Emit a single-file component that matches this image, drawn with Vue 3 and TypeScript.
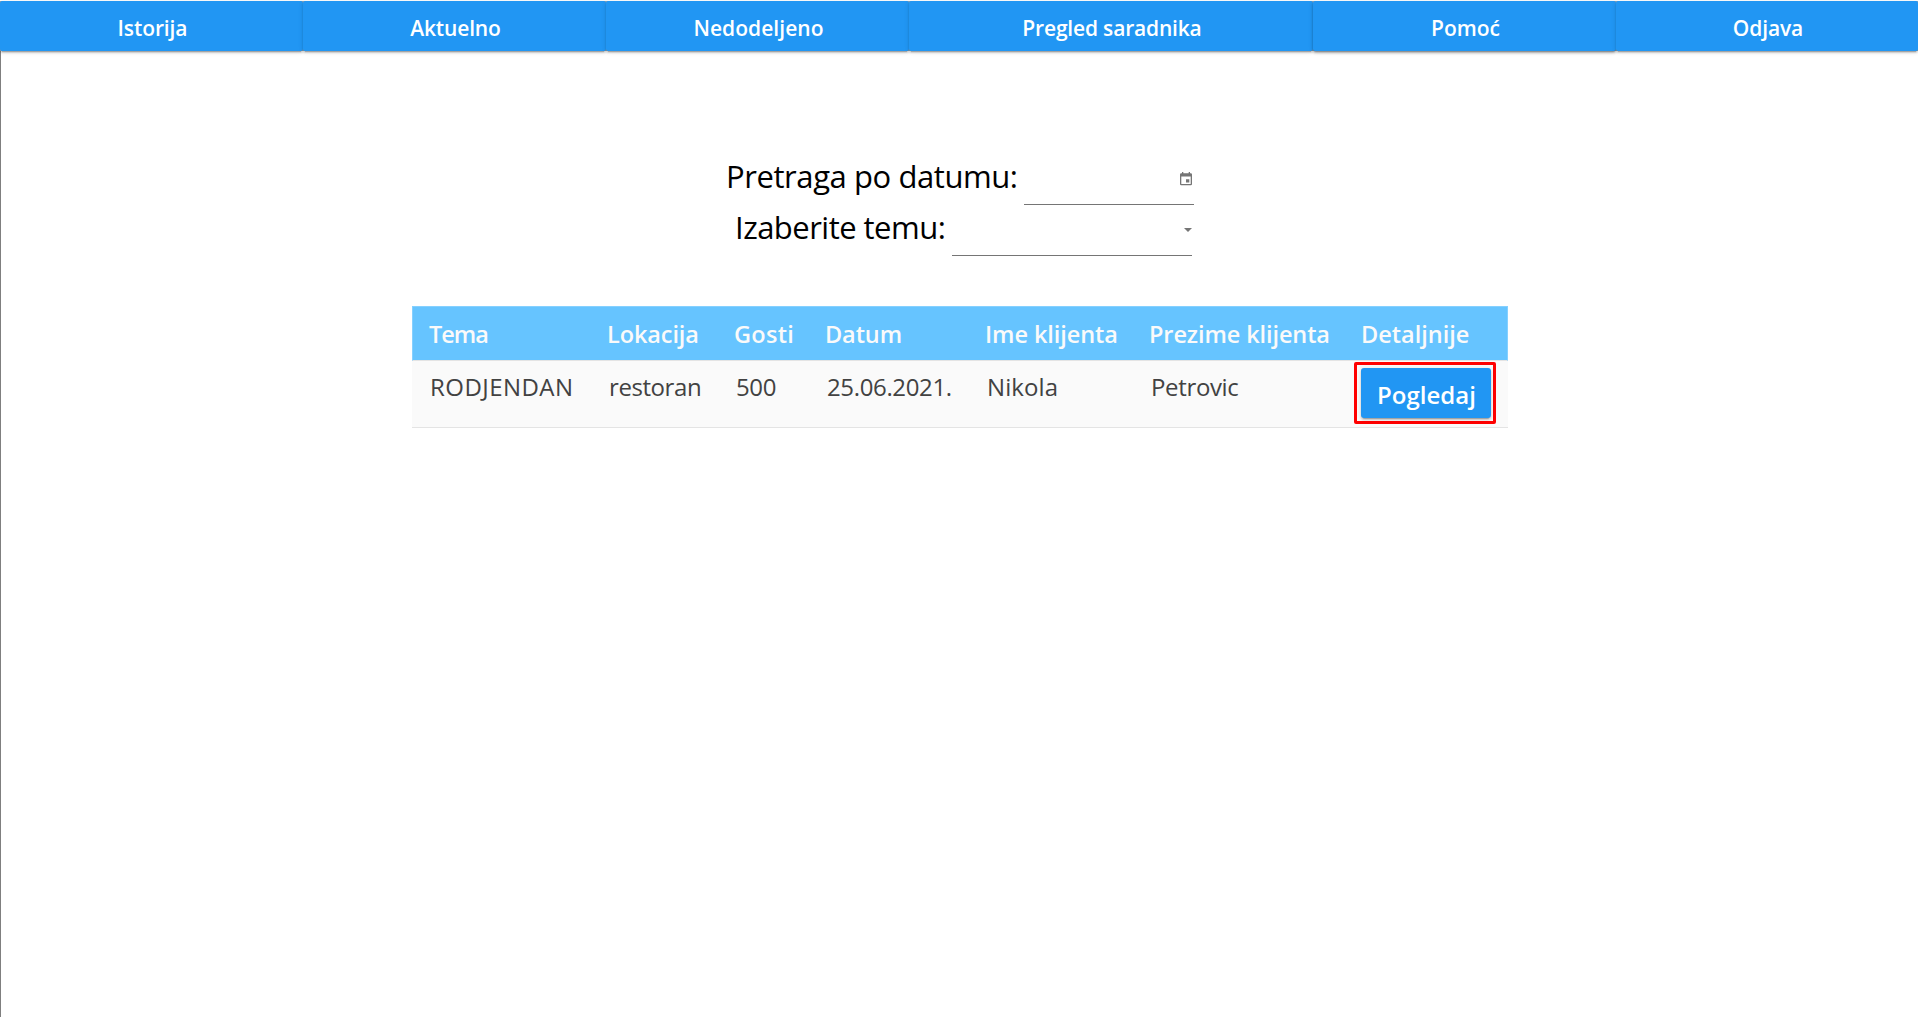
<script setup lang="ts">
interface NavItem {
  label: string
  active?: boolean
  tracking: number
}

interface Column {
  title: string
  value: string
  titleTracking: number
  valueTracking: number
}

const nav: NavItem[] = [
  { label: 'Istorija', tracking: -0.1 },
  { label: 'Aktuelno', tracking: -0.15 },
  { label: 'Nedodeljeno', tracking: 0.05 },
  { label: 'Pregled saradnika', tracking: -0.18 },
  { label: 'Pomoć', active: true, tracking: 0 },
  { label: 'Odjava', tracking: -0.1 },
]

const columns: Column[] = [
  { title: 'Tema', value: 'RODJENDAN', titleTracking: -1, valueTracking: 0.45 },
  { title: 'Lokacija', value: 'restoran', titleTracking: -0.1, valueTracking: -0.42 },
  { title: 'Gosti', value: '500', titleTracking: 0.3, valueTracking: -0.4 },
  { title: 'Datum', value: '25.06.2021.', titleTracking: -0.1, valueTracking: -0.36 },
  { title: 'Ime klijenta', value: 'Nikola', titleTracking: -0.08, valueTracking: 0.1 },
  { title: 'Prezime klijenta', value: 'Petrovic', titleTracking: -0.1, valueTracking: -0.35 },
]
</script>

<template>
  <div class="page">
    <nav class="nav">
      <button v-for="item in nav" :key="item.label" class="nav-button" :class="{ active: item.active }">
        <span :style="{ letterSpacing: item.tracking + 'px' }">{{ item.label }}</span>
      </button>
    </nav>

    <main class="content">
      <section class="filters">
        <div class="filter date-filter">
          <span class="label">Pretraga po datumu:</span>
          <div class="field">
            <svg width="12" height="14" viewBox="0 0 12 14" fill="#757575">
              <path fill-rule="evenodd" d="M2 0h1.3v1.3h5.4V0H10v1.3h.8Q12 1.3 12 2.5v9.6q0 1.2-1.2 1.2H1.2Q0 13.3 0 12.1V2.5Q0 1.3 1.2 1.3H2zM1.3 4.6v7.4h9.4V4.6zM6 7.3h3.3v3.300H6z" />
            </svg>
          </div>
        </div>
        <div class="filter theme-filter">
          <span class="label">Izaberite temu:</span>
          <div class="field">
            <svg width="8" height="4" viewBox="0 0 8 4"><path d="M0 0h8L4 4z" fill="#757575" /></svg>
          </div>
        </div>
      </section>

      <section class="table">
        <div class="row head">
          <div v-for="col in columns" :key="col.title" class="cell" :style="{ letterSpacing: col.titleTracking + 'px' }">{{ col.title }}</div>
          <div class="cell">Detaljnije</div>
        </div>
        <div class="row body">
          <div v-for="col in columns" :key="col.title" class="cell" :style="{ letterSpacing: col.valueTracking + 'px' }">{{ col.value }}</div>
          <div class="action">
            <div class="highlight"><button class="view-button">Pogledaj</button></div>
          </div>
        </div>
      </section>
    </main>
  </div>
</template>

<style>
body {
  background: #fff;
}
</style>

<style scoped>
.page {
  box-sizing: border-box;
  height: 1017px;
  padding-top: 1px;
  display: flex;
  flex-direction: column;
  font-family: "Open Sans", "Noto Sans", sans-serif;
  overflow: hidden;
}
button {
  border: 0;
  margin: 0;
  font-family: inherit;
  font-weight: 600;
  color: #fff;
  background: #2196f3;
  box-shadow: 0 3px 1px -2px rgba(0, 0, 0, 0.2), 0 2px 2px 0 rgba(0, 0, 0, 0.14), 0 1px 5px 0 rgba(0, 0, 0, 0.12);
}
.nav {
  display: grid;
  grid-template-columns: 303px 303px 303px 404px 303px 302px;
  height: 50px;
  background: #a8a8a8;
  position: relative;
}
.nav-button {
  height: 50px;
  padding: 3px 0 0 2px;
  border-radius: 2px;
  font-size: 21px;
  line-height: 46px;
}
.nav-button.active {
  box-shadow: 0 2px 2px -1px rgba(0, 0, 0, 0.35), 0 2px 3px 0 rgba(0, 0, 0, 0.2), 0 1px 5px 0 rgba(0, 0, 0, 0.12);
}
.content {
  flex: 1;
  border-left: 1px solid #7f7f7f;
}
.filters {
  padding: 103px 0 0 725px;
}
.filter {
  display: flex;
  height: 51px;
}
.label {
  font-size: 31px;
  line-height: 45px;
  color: #000;
  letter-spacing: -0.42px;
  white-space: nowrap;
  width: 298px;
}
.field {
  box-sizing: border-box;
  height: 51px;
  width: 170px;
  border-bottom: 1px solid #757575;
  display: flex;
  justify-content: flex-end;
  align-items: flex-start;
  padding: 18px 2px 0 0;
}
.theme-filter {
  padding-left: 9px;
}
.theme-filter .label {
  width: 217px;
  letter-spacing: -0.52px;
}
.theme-filter .field {
  width: 240px;
  padding: 23px 0 0;
}
.table {
  width: 1096px;
  margin: 50px 0 0 411px;
}
.row {
  display: grid;
  grid-template-columns: 178px 127px 91px 160px 164px 212px 164px;
  box-sizing: border-box;
}
.head {
  height: 55px;
  border: 1px solid #85d0ff;
  border-bottom-color: #e4e4e4;
  background: #66c4ff;
  color: #fafafa;
  font-size: 23.5px;
  font-weight: 600;
  line-height: 55px;
}
.head .cell {
  height: 53px;
  padding-left: 16px;
  white-space: nowrap;
}
.body {
  height: 67px;
  border-bottom: 1px solid #e4e4e4;
  background: #fafafa;
  color: #424242;
  font-size: 24px;
  line-height: 32px;
}
.body .cell {
  padding: 10px 0 0 19px;
  white-space: nowrap;
}
.body .cell:first-child {
  padding-left: 18px;
}
.action {
  padding: 1px 0 0 10px;
}
.highlight {
  box-sizing: border-box;
  width: 142px;
  height: 62px;
  border: 3px solid #f00;
  border-radius: 2px;
  padding: 3px 3px 0 4px;
}
.view-button {
  display: block;
  width: 130px;
  height: 50px;
  padding: 2px 0 0 1px;
  border-radius: 3px;
  font-size: 24px;
  line-height: 47px;
}
</style>
